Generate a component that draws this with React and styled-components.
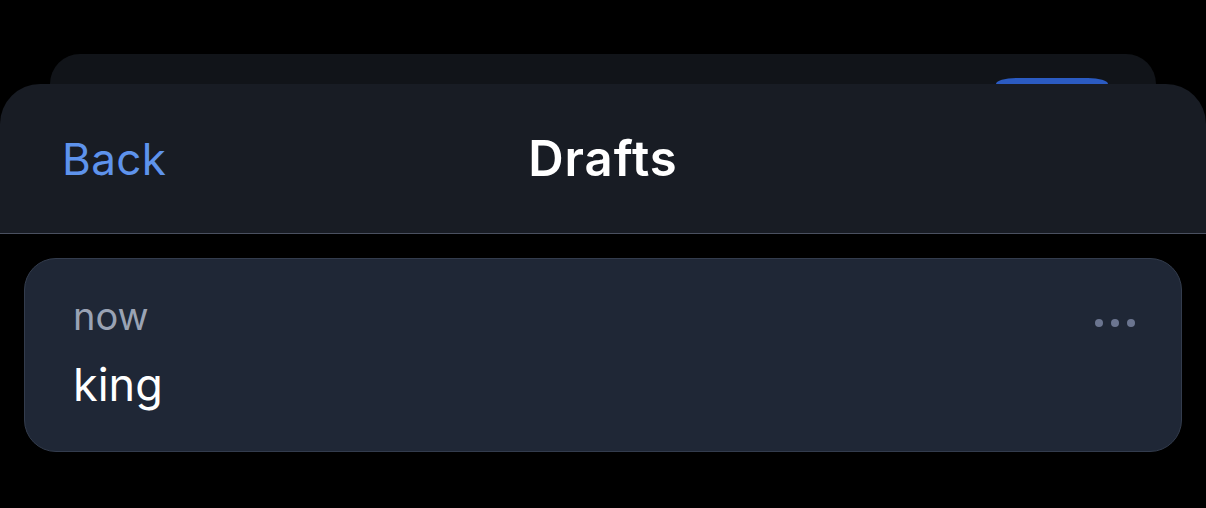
import React from 'react';
import styled, { createGlobalStyle } from 'styled-components';

const GlobalStyle = createGlobalStyle`
    html, body {
        margin: 0;
        padding: 0;
        background: #000000;
    }
    body {
        font-family: Inter, "Noto Sans", sans-serif;
        -webkit-font-smoothing: antialiased;
    }
`

const Screen = styled.div`
    width: 1206px;
    height: 508px;
    overflow: hidden;
    background: #000000;
    display: flex;
    flex-direction: column;
`

const Stack = styled.div`
    display: flex;
    flex-direction: column;
    padding-top: 54px;
`

const BackSheet = styled.div`
    margin: 0 50px 0 50px;
    height: 30px;
    background: #111419;
    border-radius: 32px 32px 0 0;
    display: flex;
    justify-content: flex-end;
    align-items: flex-end;
    padding-right: 48px;
`

const Pill = styled.div`
    width: 112px;
    height: 6px;
    background: #2b5bc2;
    border-radius: 20px 20px 0 0 / 6px 6px 0 0;
`

const Header = styled.header`
    height: 149px;
    background: #181c24;
    border-radius: 40px 40px 0 0;
    border-bottom: 1px solid #4a5060;
    display: grid;
    grid-template-columns: 1fr auto 1fr;
    align-items: center;
    padding: 0 62px;
`

const BackButton = styled.button`
    justify-self: start;
    background: none;
    border: none;
    padding: 0;
    font-family: Inter, sans-serif;
    font-size: 44px;
    letter-spacing: 0.4px;
    color: #5e93ec;
    cursor: pointer;
`

const Title = styled.h1`
    margin: 0;
    font-size: 49px;
    font-weight: 600;
    color: #ffffff;
    letter-spacing: 1px;
`

const List = styled.div`
    padding: 24px 24px 0 24px;
`

const DraftCard = styled.div`
    height: 194px;
    box-sizing: border-box;
    background: #1f2736;
    border: 1px solid #333c4d;
    border-radius: 32px;
    padding: 32px 46px 0 48px;
    display: flex;
    justify-content: space-between;
    align-items: flex-start;
`

const DraftBody = styled.div`
    display: flex;
    flex-direction: column;
`

const Time = styled.span`
    font-size: 38px;
    color: #9aa3b4;
    line-height: 50px;
`

const Text = styled.span`
    font-size: 45px;
    color: #ffffff;
    line-height: 60px;
    margin-top: 14px;
`

const Dots = styled.div`
    display: flex;
    gap: 8px;
    margin-top: 28px;
`

const Dot = styled.span`
    width: 8px;
    height: 8px;
    border-radius: 50%;
    background: #6b7590;
`

const App = () => (
    <Screen>
        <GlobalStyle />
        <Stack>
            <BackSheet>
                <Pill />
            </BackSheet>
            <Header>
                <BackButton>Back</BackButton>
                <Title>Drafts</Title>
                <div />
            </Header>
        </Stack>
        <List>
            <DraftCard>
                <DraftBody>
                    <Time>now</Time>
                    <Text>king</Text>
                </DraftBody>
                <Dots>
                    <Dot />
                    <Dot />
                    <Dot />
                </Dots>
            </DraftCard>
        </List>
    </Screen>
);

export default App;
